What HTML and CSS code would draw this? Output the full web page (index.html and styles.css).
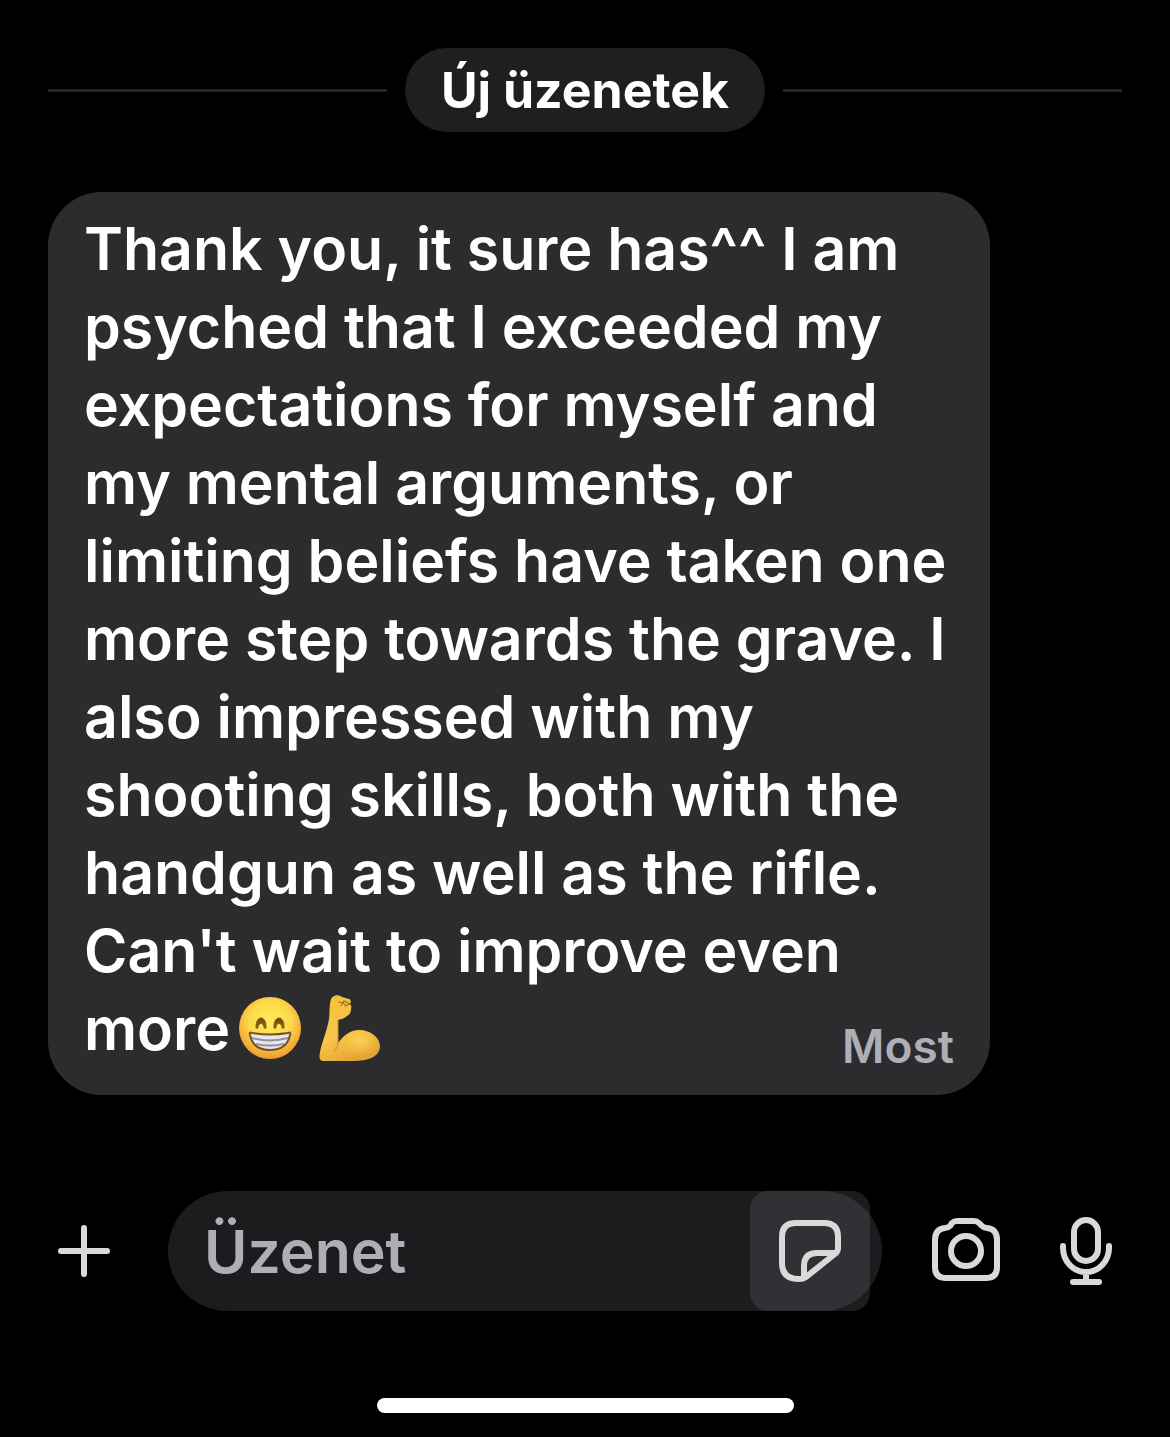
FILE: index.html
```html
<!DOCTYPE html>
<html lang="hu">
<head>
<meta charset="utf-8">
<meta name="viewport" content="width=device-width, initial-scale=1">
<title>Üzenetek</title>
<link rel="stylesheet" href="styles.css">
</head>
<body>
<main class="thread">
  <div class="divider">
    <h1 class="divider-label">Új üzenetek</h1>
  </div>
  <article class="bubble">
    <p class="bubble-text" lang="en">Thank you, it sure has^^ I am psyched that I exceeded my expectations for myself and my mental arguments, or limiting beliefs have taken one more step towards the grave. I also impressed with my shooting skills, both with the handgun as well as the rifle. Can't wait to improve even more<svg class="emoji" viewBox="0 0 64 70" role="img" aria-label="Beaming face">
      <defs>
        <radialGradient id="face" cx=".5" cy=".4" r=".62"><stop offset="0" stop-color="#ffeb5c"/><stop offset=".55" stop-color="#fdd849"/><stop offset="1" stop-color="#eb962d"/></radialGradient>
        <linearGradient id="brow" x1="0" y1="0" x2="0" y2="1"><stop offset="0" stop-color="#63420d"/><stop offset="1" stop-color="#a86f14"/></linearGradient>
      </defs>
      <circle cx="32" cy="35" r="31" fill="url(#face)"/>
      <path d="M18 34c0-12 10-12 10 0 0 2-2 2-2 0-1-5-5-5-6 0 0 2-2 2-2 0zM36 34c0-12 10-12 10 0 0 2-2 2-2 0-1-5-5-5-6 0 0 2-2 2-2 0z" fill="url(#brow)" stroke="#80540f" stroke-width="1"/>
      <path d="M12 42c-1-2 0-3 2-2 12 2 24 2 36 0 2-1 3 0 2 2-2 10-9 15-20 15s-18-5-20-15z" fill="#e7e7ed" stroke="#765124" stroke-width="2"/>
      <path d="M14 45c11 3 25 3 36 0M18 51c9 2 19 2 28 0" fill="none" stroke="#91939d" stroke-width="2"/>
    </svg><svg class="emoji emoji-arm" viewBox="0 0 64 70" role="img" aria-label="Flexed biceps">
      <defs>
        <linearGradient id="skin" x1="0" y1="0" x2=".5" y2="1"><stop offset="0" stop-color="#f5bd3c"/><stop offset=".6" stop-color="#f8c648"/><stop offset="1" stop-color="#e4a435"/></linearGradient>
        <radialGradient id="muscle" cx=".5" cy=".35" r=".6"><stop offset="0" stop-color="#fbd157"/><stop offset="1" stop-color="#fac542" stop-opacity="0"/></radialGradient>
      </defs>
      <path d="M13 6c2-4 7-5 11-2l7 2q3 1 1 5 2 2 1 5 0 5-4 7c-2 2-5 3-9 4v23C25 43 32 37 41 37c12 0 21 8 21 16 0 11-12 15-28 15H6c-5 0-5-4-4-9 2-10 7-21 9-33C12 19 11 12 13 6z" fill="url(#skin)"/>
      <ellipse cx="42" cy="52" rx="19" ry="14" fill="url(#muscle)"/>
      <path d="M20 28v23q-1 4-3 7" fill="none" stroke="#cb8c2c" stroke-width="1" stroke-linecap="round"/>
      <path d="M21 9l4 1 1-2M23 13l2-3 3 2m-2-4 6 3-5 2" fill="none" stroke="#93601d" stroke-width="1" stroke-linecap="round"/>
    </svg><span class="bubble-time" lang="hu">Most</span></p>
  </article>
</main>
<form class="composer">
  <button class="icon-button" type="button" aria-label="Csatolás">
    <svg class="icon icon-plus" viewBox="0 0 52 52"><path d="M26 3v46M3 26h46"/></svg>
  </button>
  <div class="field">
    <input class="field-input" type="text" placeholder="Üzenet" aria-label="Üzenet">
    <button class="sticker-button" type="button" aria-label="Matricák">
      <svg class="icon icon-sticker" viewBox="0 0 62 62"><path d="M17 3h28q14 0 14 14v12q0 2-2 4L27 57q-3 2-7 2Q3 59 3 43V17Q3 3 17 3zM57 33H38Q25 33 25 46v10"/></svg>
    </button>
  </div>
  <button class="icon-button" type="button" aria-label="Kamera">
    <svg class="icon icon-camera" viewBox="0 0 68 66"><path d="M25 3h17q3 0 5 2l3 3q2 2 5 2 10 1 10 12v27q0 11-11 11H14Q3 60 3 49V22Q3 11 13 10q3 0 5-2l2-3q2-2 5-2z"/><circle cx="34" cy="33" r="15"/></svg>
  </button>
  <button class="icon-button" type="button" aria-label="Hangüzenet">
    <svg class="icon icon-mic" viewBox="0 0 52 68"><rect x="14" y="3" width="24" height="41" rx="12"/><path d="M3 29v2a23 24 0 0 0 46 0v-2M26 55v9M13 65h26"/></svg>
  </button>
</form>
<div class="home-indicator"></div>
</body>
</html>
```

FILE: styles.css
```css
* {
  box-sizing: border-box;
}

body {
  display: flex;
  flex-direction: column;
  min-height: 100vh;
  margin: 0;
  padding: 48px 48px 24px;
  background: #000;
  color: #fff;
  font-family: Inter, "Liberation Sans", sans-serif;
}

.divider {
  display: flex;
  align-items: center;
  gap: 18px;
  margin-bottom: 60px;
}

.divider::before,
.divider::after {
  content: "";
  flex: 1;
  height: 3px;
  background: #262626;
}

.divider-label {
  margin: 0;
  padding: 0 36px;
  border-radius: 42px;
  background: #1f1f1f;
  font-size: 50px;
  font-weight: 700;
  line-height: 84px;
}

.bubble {
  margin-right: 132px;
  padding: 18px 36px 27px;
  border-radius: 54px;
  background: #2c2c2e;
}

.bubble-text {
  margin: 0;
  font-size: 59px;
  font-weight: 600;
  line-height: 78px;
}

.emoji {
  width: 64px;
  height: 70px;
  margin-left: 8px;
  vertical-align: -13px;
}

.emoji-arm {
  margin-left: 16px;
}

.bubble-time {
  float: right;
  margin-top: 28px;
  color: #aeaeb6;
  font-size: 46px;
  line-height: 56px;
}

.composer {
  display: flex;
  align-items: center;
  gap: 50px;
  margin-top: 96px;
  padding: 0 10px;
}

.icon-button,
.sticker-button {
  display: flex;
  align-items: center;
  justify-content: center;
  padding: 0;
  border: 0;
  background: none;
  color: #d9d9d9;
}

.icon-button:last-child {
  margin-left: 10px;
}

.icon {
  fill: none;
  stroke: currentColor;
  stroke-width: 6px;
  stroke-linecap: round;
  stroke-linejoin: round;
}

.icon-plus {
  width: 52px;
  height: 52px;
}

.icon-sticker {
  width: 62px;
  height: 62px;
}

.icon-camera {
  width: 68px;
  height: 66px;
}

.icon-mic {
  width: 52px;
  height: 68px;
}

.field {
  display: flex;
  flex: 1;
  min-width: 0;
  height: 120px;
  margin-left: 8px;
  padding-right: 12px;
  border-radius: 60px;
  background: #1c1c1e;
}

.field-input {
  flex: 1;
  min-width: 0;
  padding: 0 36px;
  border: 0;
  outline: 0;
  background: none;
  color: #fff;
  font: 600 59px Inter, "Liberation Sans", sans-serif;
}

.field-input::placeholder {
  color: #aeaeb6;
  opacity: 1;
}

.sticker-button {
  width: 120px;
  border-radius: 18px;
  background: rgba(118, 118, 128, 0.24);
}

.home-indicator {
  align-self: center;
  width: 417px;
  height: 15px;
  margin-top: auto;
  border-radius: 8px;
  background: #fff;
}
```
